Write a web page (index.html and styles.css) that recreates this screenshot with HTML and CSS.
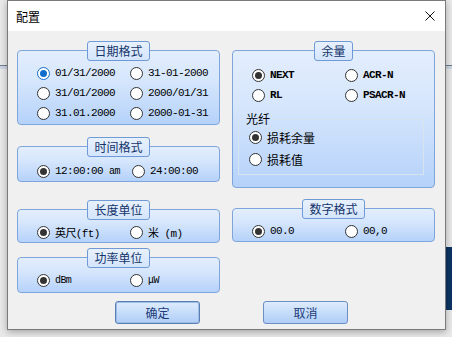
FILE: index.html
```html
<!DOCTYPE html>
<html lang='zh'>
<head>
<meta charset='UTF-8'>
<title>配置</title>
<link rel="stylesheet" href="styles.css">
</head>
<body>
  <div class='dialog'>
    <!-- ---------- TITLE BAR ---------- -->
    <div class='titlebar'>
      <span class='title'>配置</span>
      <svg class='close' viewBox='0 0 10 10'><path d='M0.5 0.5L9.5 9.5M9.5 0.5L0.5 9.5' stroke='#111' stroke-width='1' fill='none'/></svg>
    </div>

    <div class='content'>
      <div class='columns'>
        <!-- ---------- LEFT COLUMN ---------- -->
        <div class='col'>
          <section class='group g-date'>
            <div class='tab'>日期格式</div>
            <div class='box'>
              <div class='opts'>
                <label class='radio'><span class='ring on focus'></span>01/31/2000</label>
                <label class='radio'><span class='ring'></span>31-01-2000</label>
                <label class='radio'><span class='ring'></span>31/01/2000</label>
                <label class='radio'><span class='ring'></span>2000/01/31</label>
                <label class='radio'><span class='ring'></span>31.01.2000</label>
                <label class='radio'><span class='ring'></span>2000-01-31</label>
              </div>
            </div>
          </section>

          <section class='group g-time'>
            <div class='tab'>时间格式</div>
            <div class='box'>
              <div class='opts single wide'>
                <label class='radio'><span class='ring on'></span><span>12:00:00&nbsp;<span class='small'>am</span></span></label>
                <label class='radio'><span class='ring'></span>24:00:00</label>
              </div>
            </div>
          </section>

          <section class='group g-len'>
            <div class='tab'>长度单位</div>
            <div class='box'>
              <div class='opts single'>
                <label class='radio'><span class='ring on'></span>英尺(ft)</label>
                <label class='radio'><span class='ring'></span>米&nbsp;(m)</label>
              </div>
            </div>
          </section>

          <section class='group g-pow'>
            <div class='tab'>功率单位</div>
            <div class='box'>
              <div class='opts single'>
                <label class='radio'><span class='ring on'></span><span class='small'>dBm</span></label>
                <label class='radio'><span class='ring'></span><span class='small'>μW</span></label>
              </div>
            </div>
          </section>
        </div>

        <!-- ---------- RIGHT COLUMN ---------- -->
        <div class='col'>
          <section class='group g-margin'>
            <div class='tab'>余量</div>
            <div class='box'>
              <div class='opts'>
                <label class='radio bold'><span class='ring on'></span>NEXT</label>
                <label class='radio bold'><span class='ring'></span>ACR-N</label>
                <label class='radio bold'><span class='ring'></span>RL</label>
                <label class='radio bold'><span class='ring'></span>PSACR-N</label>
              </div>
              <fieldset class='fiber'>
                <legend>光纤</legend>
                <label class='radio cn'><span class='ring on'></span>损耗余量</label>
                <label class='radio cn'><span class='ring'></span>损耗值</label>
              </fieldset>
            </div>
          </section>

          <section class='group g-num'>
            <div class='tab'>数字格式</div>
            <div class='box'>
              <div class='opts single'>
                <label class='radio'><span class='ring on'></span>00.0</label>
                <label class='radio'><span class='ring'></span>00,0</label>
              </div>
            </div>
          </section>
        </div>
      </div>

      <!-- ---------- BUTTONS ---------- -->
      <div class='buttons'>
        <button class='btn ok'>确定</button>
        <button class='btn'>取消</button>
      </div>
    </div>
  </div>
</body>
</html>
```

FILE: styles.css
```css
/* ---------- GLOBAL ---------- */
*{box-sizing:border-box;margin:0;padding:0;}
html,body{height:100%;}
body{
  font-family:'Liberation Mono','Noto Sans CJK SC',monospace;font-size:11px;color:#000;overflow:hidden;
  background:
    linear-gradient(#0c3462,#0c3462) no-repeat 446px 247px / 6px 63px,
    linear-gradient(to bottom,transparent 65px,#6e7d90 65px,#6e7d90 66px,#cdd6e2 66px,#cdd6e2 69px,transparent 69px),
    #e9e9e9;
}
/* ---------- DIALOG ---------- */
.dialog{
  margin-left:7px;width:439px;height:330px;border:1px solid #7a7a7a;background:#f0f0f0;
  box-shadow:0 2px 7px rgba(0,0,0,.3);display:flex;flex-direction:column;
}
.titlebar{
  height:30px;flex:none;background:#fff;display:flex;align-items:center;justify-content:space-between;
  padding:0 10px 0 8px;font:12px 'Noto Sans CJK SC',sans-serif;
}
.close{width:10px;height:10px;}
.content{padding:10px 10px 0 9px;}
.columns{display:grid;grid-template-columns:203px 203px;gap:12px;align-items:start;}
.col{display:flex;flex-direction:column;}
/* ---------- GROUP BOXES ---------- */
.group{display:flex;flex-direction:column;align-items:center;}
.tab{
  position:relative;z-index:1;height:20px;padding:0 6px;margin-bottom:-11px;
  border:1px solid #6f9ad6;border-radius:3px;background:linear-gradient(#e8f1fd,#d4e5fc);
  color:#14346a;font:12px/18px 'Noto Sans CJK SC',sans-serif;
}
.box{
  align-self:stretch;border:1px solid #7ea6dc;border-radius:4px;
  background:linear-gradient(#e3eefd,#d6e6fc 40%,#b5d2fa);
}
.g-date .box{padding:12px 0 1px;}
.g-time{margin-top:12px;}
.g-time .box{padding:15px 0 1px;}
.g-len{margin-top:18px;}
.g-len .box{padding:13px 0 1px;}
.g-pow{margin-top:5px;}
.g-pow .box{padding:13px 0 3px;}
.g-margin .box{padding:14px 0 12px;}
.g-num{margin-top:11px;}
.g-num .box{padding:13px 0 1px;}
/* ---------- RADIOS ---------- */
.opts{display:grid;grid-template-columns:93px 1fr;padding-left:19px;}
.opts.wide{grid-template-columns:95px 1fr;}
.radio{display:flex;align-items:center;height:20px;white-space:nowrap;letter-spacing:-.6px;}
.single .radio{height:18px;}
.radio.bold{font-weight:bold;}
.small{font-size:10px;}
.ring{
  position:relative;flex:none;width:13px;height:13px;margin-right:5px;
  border:1px solid #333;border-radius:50%;background:#fff;
}
.ring.on::after{
  content:'';position:absolute;left:2px;top:2px;width:7px;height:7px;border-radius:50%;background:#333;
}
.ring.focus{border-color:#0f6ecd;}
.ring.focus::after{background:#0f6ecd;}
/* Fiber sub group */
.fiber{margin:7px 10px 0 5px;padding:0 0 4px 10px;border:1px solid #d8e3f0;}
.fiber legend{margin-left:-5px;padding:0 2px;font:12px/14px 'Noto Sans CJK SC',sans-serif;}
.radio.cn{height:22px;letter-spacing:0;font:12px 'Noto Sans CJK SC',sans-serif;}
/* ---------- BUTTONS ---------- */
.buttons{display:flex;gap:63px;margin:8px 0 0 98px;}
.btn{
  width:85px;height:23px;border:1px solid #6b8fc2;border-radius:3px;
  background:linear-gradient(#deebfd,#c6ddfa 50%,#afcdf8);
  font:12px 'Noto Sans CJK SC',sans-serif;color:#1c3b78;
}
.btn.ok{border-color:#5a7fb5;box-shadow:inset 0 0 0 1px #9dbde8;}
```
